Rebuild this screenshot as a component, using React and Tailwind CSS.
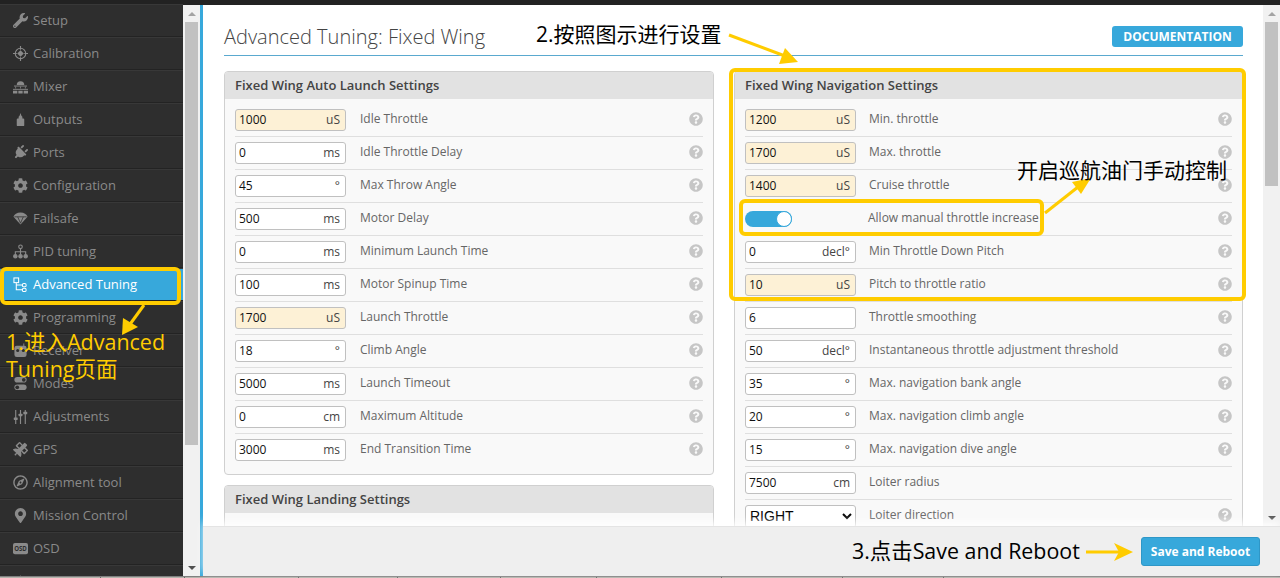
import React from 'react';
import { FaWrench, FaCog, FaSatellite, FaRegCompass, FaMapMarkerAlt, FaPlug, FaQuestionCircle } from 'react-icons/fa';

const OutputsIcon = ({ className }) => (
  <svg viewBox="0 0 16 16" className={className} fill="currentColor">
    <path d="M8 1l1 3 1 1v2h1a1 1 0 0 1 1 1v6a1 1 0 0 1-1 1H5a1 1 0 0 1-1-1V8a1 1 0 0 1 1-1h1V5l1-1z" />
  </svg>
);

const PortsIcon = ({ className }) => <FaPlug className={`${className} rotate-45`} />;

const TuningIcon = ({ className }) => (
  <svg viewBox="0 0 16 16" className={className} fill="none" stroke="currentColor" strokeWidth="1.1">
    <rect x="1" y="1" width="5" height="5" />
    <rect x="10" y="7" width="4" height="3.5" rx="1.5" />
    <rect x="10" y="12" width="4" height="3.5" rx="1.5" />
    <path d="M3.5 6v7.5H10M3.5 8.5H10" />
  </svg>
);

const CalibrationIcon = ({ className }) => (
  <svg viewBox="0 0 16 16" className={className} fill="none" stroke="currentColor" strokeWidth="1.2">
    <circle cx="8" cy="8" r="5.6" />
    <path d="M8 0v4M8 12v4M0 8h4M12 8h4" />
    <path d="M8 4.5L11.5 8 8 11.5 4.5 8z" fill="currentColor" stroke="none" />
  </svg>
);

const MixerIcon = ({ className }) => (
  <svg viewBox="0 0 16 16" className={className} fill="currentColor">
    <path d="M4 6.5a4 4 0 0 1 8 0z" />
    <path d="M1 7h14v1H1z" />
    <path d="M2.5 8h.8v2h-.8zM7.6 8h.8v2h-.8zM12.7 8h.8v2h-.8z" />
    <path d="M0 10.5h16v1H0z" />
    <path d="M0 12.5h4.6v3H0zM5.7 12.5h4.6v3H5.7zM11.4 12.5H16v3h-4.6z" />
  </svg>
);

const FailsafeIcon = ({ className }) => (
  <svg viewBox="0 0 16 16" className={className}>
    <path d="M8 1.5c3.8 0 6.6 1.8 7.5 4.5L8 14.5.5 6C1.4 3.3 4.2 1.5 8 1.5z" fill="currentColor" />
    <path d="M1.5 6.2h13M5 6.2L8 13l3-6.800" fill="none" stroke="#2e2e2e" strokeWidth="0.8" />
  </svg>
);

const PidIcon = ({ className }) => (
  <svg viewBox="0 0 16 16" className={className} fill="none" stroke="currentColor" strokeWidth="1.2">
    <circle cx="8" cy="3" r="1.9" />
    <circle cx="2.5" cy="13" r="1.8" fill="currentColor" />
    <circle cx="8" cy="13" r="1.8" fill="currentColor" />
    <circle cx="13.500" cy="13" r="1.8" fill="currentColor" />
    <path d="M8 5v6M2.500 11V8.300h11V11" />
  </svg>
);

const ReceiverIcon = ({ className }) => (
  <svg viewBox="0 0 16 16" className={className}>
    <path d="M11.500 0.500v3" stroke="currentColor" strokeWidth="1" />
    <rect x="1.500" y="3" width="13" height="12" rx="2.500" fill="currentColor" />
    <circle cx="5" cy="8" r="1.600" fill="#2e2e2e" />
    <circle cx="11" cy="8" r="1.600" fill="#2e2e2e" />
  </svg>
);

const ModesIcon = ({ className }) => (
  <svg viewBox="0 0 16 16" className={className}>
    <rect x="1.500" y="1" width="13" height="6" rx="3" fill="currentColor" />
    <circle cx="11.500" cy="4" r="2" fill="#2e2e2e" />
    <rect x="1.500" y="9" width="13" height="6" rx="3" fill="currentColor" />
    <circle cx="4.500" cy="12" r="2" fill="#2e2e2e" />
  </svg>
);

const AdjustmentsIcon = ({ className }) => (
  <svg viewBox="0 0 16 16" className={className} fill="currentColor">
    <path d="M2.300 1h1.200v15H2.300zM7.400 1h1.200v15H7.400zM12.500 1h1.200v15h-1.200z" />
    <rect x="0.800" y="9" width="4.200" height="2.600" rx="0.600" />
    <rect x="5.900" y="5" width="4.200" height="2.600" rx="0.600" />
    <rect x="11" y="3" width="4.200" height="2.600" rx="0.600" />
  </svg>
);

const OsdIcon = ({ className }) => (
  <svg viewBox="0 0 16 12" className={className}>
    <rect width="16" height="12" rx="2" fill="currentColor" />
    <text x="8" y="8.600" textAnchor="middle" fontSize="6.500" fontWeight="700" fill="#2e2e2e" fontFamily="Open Sans">OSD</text>
  </svg>
);

const navItems = [
  { label: 'Setup', icon: FaWrench },
  { label: 'Calibration', icon: CalibrationIcon },
  { label: 'Mixer', icon: MixerIcon },
  { label: 'Outputs', icon: OutputsIcon },
  { label: 'Ports', icon: PortsIcon },
  { label: 'Configuration', icon: FaCog },
  { label: 'Failsafe', icon: FailsafeIcon },
  { label: 'PID tuning', icon: PidIcon },
  { label: 'Advanced Tuning', icon: TuningIcon, active: true },
  { label: 'Programming', icon: FaCog },
  { label: 'Receiver', icon: ReceiverIcon },
  { label: 'Modes', icon: ModesIcon },
  { label: 'Adjustments', icon: AdjustmentsIcon },
  { label: 'GPS', icon: FaSatellite },
  { label: 'Alignment tool', icon: FaRegCompass },
  { label: 'Mission Control', icon: FaMapMarkerAlt },
  { label: 'OSD', icon: OsdIcon },
  { label: '', icon: OutputsIcon },
];

const launchRows = [
  { value: '1000', unit: 'uS', label: 'Idle Throttle', changed: true },
  { value: '0', unit: 'ms', label: 'Idle Throttle Delay' },
  { value: '45', unit: '°', label: 'Max Throw Angle' },
  { value: '500', unit: 'ms', label: 'Motor Delay' },
  { value: '0', unit: 'ms', label: 'Minimum Launch Time' },
  { value: '100', unit: 'ms', label: 'Motor Spinup Time' },
  { value: '1700', unit: 'uS', label: 'Launch Throttle', changed: true },
  { value: '18', unit: '°', label: 'Climb Angle' },
  { value: '5000', unit: 'ms', label: 'Launch Timeout' },
  { value: '0', unit: 'cm', label: 'Maximum Altitude' },
  { value: '3000', unit: 'ms', label: 'End Transition Time' },
];

const navRows = [
  { value: '1200', unit: 'uS', label: 'Min. throttle', changed: true },
  { value: '1700', unit: 'uS', label: 'Max. throttle', changed: true },
  { value: '1400', unit: 'uS', label: 'Cruise throttle', changed: true },
  { toggle: true, label: 'Allow manual throttle increase' },
  { value: '0', unit: 'decl°', label: 'Min Throttle Down Pitch' },
  { value: '10', unit: 'uS', label: 'Pitch to throttle ratio', changed: true },
  { value: '6', unit: '', label: 'Throttle smoothing' },
  { value: '50', unit: 'decl°', label: 'Instantaneous throttle adjustment threshold' },
  { value: '35', unit: '°', label: 'Max. navigation bank angle' },
  { value: '20', unit: '°', label: 'Max. navigation climb angle' },
  { value: '15', unit: '°', label: 'Max. navigation dive angle' },
  { value: '7500', unit: 'cm', label: 'Loiter radius', noHelp: true },
  { select: 'RIGHT', label: 'Loiter direction' },
];

const statusWidths = [101, 84, 114, 99, 103, 96, 125, 121, 101];

function Row({ row, last, narrowGap }) {
  return (
    <div className={`mx-[10px] h-[33px] flex items-center shrink-0 border-b ${last ? 'border-transparent' : 'border-[#dfdfdf]'}`}>
      {row.toggle ? (
        <div className="w-[47px] h-[16px] rounded-full bg-[#37a8db] flex justify-end shrink-0">
          <div className="w-[16px] h-[16px] rounded-full bg-white border border-[#37a8db]" />
        </div>
      ) : row.select ? (
        <select defaultValue={row.select} className="w-[111px] h-[23px] border border-[#c0c0c0] rounded-[3px] bg-white text-[14px] text-black shrink-0 [font-family:'Liberation_Sans',sans-serif]">
          <option>RIGHT</option>
          <option>LEFT</option>
        </select>
      ) : (
        <div className={`w-[111px] h-[22px] border border-[#c0c0c0] rounded-[3px] flex items-center justify-between pl-[3px] pr-[5px] text-[12px] text-[#111] shrink-0 ${row.changed ? 'bg-[#fdf1d6]' : 'bg-white'}`}>
          <span>{row.value}</span>
          <span className="text-[#444]">{row.unit}</span>
        </div>
      )}
      <span className={`text-[12px] text-[#666] -mt-[2px] ${row.toggle ? 'ml-[76px]' : narrowGap ? 'ml-[13px]' : 'ml-[14px]'}`}>{row.label}</span>
      {!row.noHelp && <FaQuestionCircle className="ml-auto -mt-[2px] text-[#c6c6c6] text-[14px]" />}
    </div>
  );
}

function Panel({ title, rows, closed, narrowGap, tall }) {
  return (
    <div className={`border border-[#d0d0d0] rounded-[4px] bg-[#f9f9f9] overflow-hidden ${closed ? 'pb-[7px]' : ''} ${tall ? 'h-[120px]' : ''}`}>
      <div className="h-[27px] bg-[#e2e2e2] px-[10px] flex items-center text-[13px] font-semibold text-[#444]">{title}</div>
      <div className="pt-[5px] flex flex-col">
        {rows.map((r, i) => <Row key={r.label} row={r} narrowGap={narrowGap} last={closed && i === rows.length - 1} />)}
      </div>
    </div>
  );
}

function Scrollbar({ thumb, barClass }) {
  return (
    <div className={`w-[17px] bg-[#f1f1f1] flex flex-col items-center shrink-0 ${barClass}`}>
      <div className="h-[17px] flex items-center justify-center shrink-0">
        <div className="w-0 h-0 border-x-[4px] border-x-transparent border-b-[4px] border-b-[#a3a3a3]" />
      </div>
      <div className={`w-[13px] bg-[#c1c1c1] shrink-0 ${thumb}`} />
      <div className="flex-1" />
      <div className="h-[17px] flex items-center justify-center shrink-0">
        <div className="w-0 h-0 border-x-[4px] border-x-transparent border-t-[4px] border-t-[#505050]" />
      </div>
    </div>
  );
}

export default function App() {
  return (
    <div className="relative w-[1280px] h-[578px] overflow-hidden flex flex-col bg-white [font-family:'Open_Sans','Noto_Sans_CJK_SC',sans-serif]">
      <div className="h-[5px] bg-[#222] shrink-0" />
      <div className="flex-1 flex min-h-0">
        <div className="w-[183px] bg-[#2e2e2e] overflow-hidden shrink-0 -mt-[1px]">
          {navItems.map((item, i) => (
            <div key={i} className={`h-[33px] flex items-center pl-[13px] border-b border-b-[#232323] border-t border-t-[#383838] ${item.active ? 'bg-[#37a8db] text-white' : 'text-[#8a8a8a]'}`}>
              <span className="w-[15px] h-[15px] flex items-center justify-center">
                <item.icon className="w-[15px] h-[15px]" />
              </span>
              {item.label && <span className="ml-[5px] text-[13px]">{item.label}</span>}
            </div>
          ))}
        </div>
        <Scrollbar barClass="h-full" thumb="h-[423px]" />
        <div className="w-[3px] bg-[#37a8db] shrink-0" />
        <div className="flex-1 flex flex-col min-w-0">
          <div className="flex-1 flex min-h-0">
            <div className="flex-1 min-w-0 overflow-hidden pl-[21px]">
              <div className="w-[1019px] h-[51px] border-b border-[#5aa9cf] flex items-end justify-between pb-[4px]">
                <h1 className="text-[20px] leading-[28px] font-light text-[#444]">Advanced Tuning: Fixed Wing</h1>
                <div className="w-[131px] h-[21px] mb-[4px] rounded-[3px] bg-[#37a8db] text-white text-[12px] font-bold flex items-center justify-center">DOCUMENTATION</div>
              </div>
              <div className="mt-[15px] grid grid-cols-[490px_509px] gap-x-[20px]">
                <div className="flex flex-col gap-[10px]">
                  <Panel title="Fixed Wing Auto Launch Settings" rows={launchRows} closed />
                  <Panel title="Fixed Wing Landing Settings" rows={[]} tall />
                </div>
                <Panel title="Fixed Wing Navigation Settings" rows={navRows} narrowGap />
              </div>
            </div>
            <Scrollbar barClass="self-stretch" thumb="h-[164px]" />
          </div>
          <div className="relative h-[50px] bg-[#efefef] border-t border-[#e4e4e4] flex items-center justify-end pr-[20px] shrink-0 shadow-[0_-4px_8px_rgba(255,255,255,0.85)]">
            <div className="w-[119px] h-[29px] rounded-[3px] bg-[#37a8db] border border-[#2f97c7] text-white text-[12px] font-bold flex items-center justify-center">Save and Reboot</div>
          </div>
        </div>
      </div>
      <div className="h-[2px] bg-[#b4b4ac] border-t border-[#808080] flex shrink-0">
        {statusWidths.map((w, i) => (
          <div key={i} style={{ width: w }} className="border-r border-[#666]" />
        ))}
      </div>

      {/* yellow annotations drawn over the screenshot */}
      <div className="absolute left-[0px] top-[267px] w-[181px] h-[38px] border-[4px] border-[#ffcc00] rounded-[6px]" />
      <div className="absolute left-[729px] top-[68px] w-[517px] h-[233px] border-[4px] border-[#ffcc00] rounded-[6px]" />
      <div className="absolute left-[739px] top-[199px] w-[305px] h-[37px] border-[4px] border-[#ffcc00] rounded-[6px]" />
      <svg className="absolute inset-0 pointer-events-none" width="1280" height="578" fill="#ffcc00" stroke="none">
        <path d="M144 305L128 327" stroke="#ffcc00" strokeWidth="3" />
        <path d="M122 335L123 318L138 327Z" />
        <path d="M729 35L785 56" stroke="#ffcc00" strokeWidth="3" />
        <path d="M798 62L779 64L785 48Z" />
        <path d="M1045 213L1078 187" stroke="#ffcc00" strokeWidth="3" />
        <path d="M1091 178L1081 194L1072 182Z" />
        <path d="M1086 552L1120 552" stroke="#ffcc00" strokeWidth="3" />
        <path d="M1133 552L1114 543L1119 552L1114 561Z" />
      </svg>
      <div className="absolute left-[536px] top-[19px] text-[21px] leading-[30px] text-black whitespace-nowrap">2.按照图示进行设置</div>
      <div className="absolute left-[1017px] top-[155px] text-[21px] leading-[30px] text-black whitespace-nowrap">开启巡航油门手动控制</div>
      <div className="absolute left-[852px] top-[536px] text-[21.4px] leading-[30px] text-black whitespace-nowrap">3.点击Save and Reboot</div>
      <div className="absolute left-[6px] top-[328px] w-[170px] text-[21.5px] leading-[27px] text-[#ffcc00]">1.进入Advanced Tuning页面</div>
    </div>
  );
}
